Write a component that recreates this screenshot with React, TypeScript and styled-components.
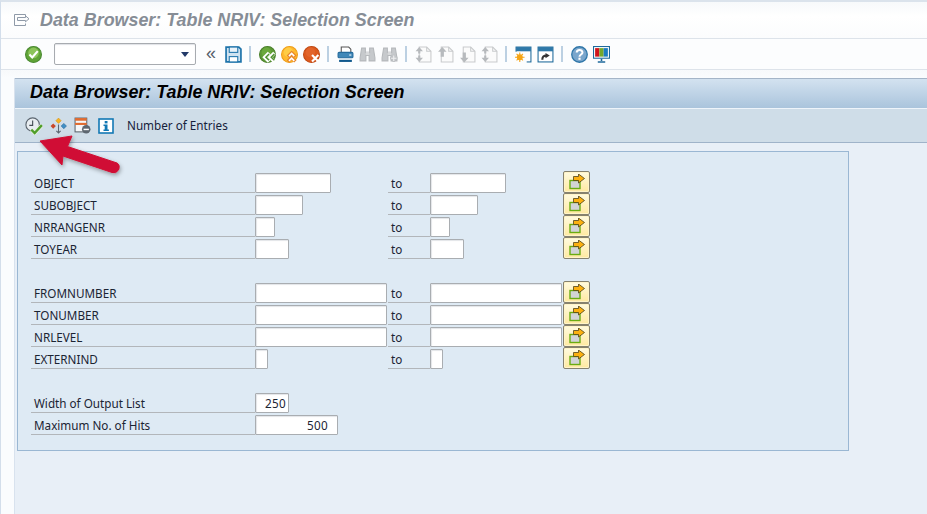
import React from "react";
import styled, { createGlobalStyle } from "styled-components";

const Global = createGlobalStyle`
  html, body { margin: 0; padding: 0; background: #fff; overflow: hidden; }
  * { box-sizing: border-box; }
`;
const Page = styled.div`
  position: relative; width: 927px; height: 514px; overflow: hidden;
  display: flex; flex-direction: column; background: #fafcfe;
  border-top: 2px solid #dbe3ec; border-left: 1px solid #d3deeb;
  font-family: "Noto Sans", "Open Sans", sans-serif; font-size: 11.7px; color: #1b2433;
`;
const TitleBar = styled.header`
  height: 37px; flex: none; display: flex; align-items: center; gap: 10px; padding-left: 13px;
  background: linear-gradient(#f7f9fb, #ffffff 40%, #fbfcfd);
  border-bottom: 1px solid #dde3ea;
`;
const TitleText = styled.h1`
  margin: 0; font: italic bold 17.9px "Liberation Sans", Arial, sans-serif; color: #868d96;
`;
const Toolbar = styled.nav`
  height: 31px; flex: none; display: flex; align-items: center; padding-left: 21px;
  background: #fcfdfe; border-bottom: 1px solid #dde3ea;
`;
const Slot = styled.span`
  width: 22px; height: 22px; flex: none; display: flex; align-items: center; justify-content: center;
`;
const Sep = styled.i`
  width: 12px; height: 16px; flex: none; display: block; position: relative;
  &::after { content: ""; position: absolute; left: 5px; top: 0; bottom: 0; width: 2px; background: #bcd0e2; }
`;
const Combo = styled.div`
  width: 142px; height: 22px; flex: none; margin-left: 10px; margin-right: 4px; position: relative;
  background: #fff; border: 1px solid #a7abb0; border-radius: 2px;
  box-shadow: inset 0 1px 1px #dfe2e6;
  &::after { content: ""; position: absolute; right: 6px; top: 8px;
    border-left: 4.5px solid transparent; border-right: 4.5px solid transparent; border-top: 5px solid #233a69; }
`;
const Chevrons = styled.span`
  width: 22px; flex: none; text-align: center; font: 18px/18px "Liberation Sans", sans-serif; color: #555f6b;
  margin-top: -3px;
`;
const Body = styled.div`
  flex: 1; display: flex; min-height: 0; background: linear-gradient(#f7f9fb, #fafcfe 8px);
`;
const Main = styled.main`
  flex: 1; margin: 8px 0 0 13px; background: #e8eff7; min-width: 0; display: flex; flex-direction: column;
  border-left: 1px solid #d8e2ee;
`;
const ScreenTitle = styled.div`
  height: 31px; flex: none; display: flex; align-items: center; padding: 0 0 2px 15px;
  border-top: 1px solid #a4b5c8; border-bottom: 1px solid #eef4fa;
  background: linear-gradient(#d3e2f0, #aac4dc);
  font: italic bold 17.9px "Liberation Sans", Arial, sans-serif; color: #000;
`;
const ActionBar = styled.div`
  height: 34px; flex: none; display: flex; align-items: center; padding-left: 7px; gap: 0;
  background: #cfdde8; border-bottom: 1px solid #9fb3c9;
`;
const ActionIcon = styled.span`
  width: 24px; height: 24px; flex: none; display: flex; align-items: center; justify-content: center;
`;
const ActionLabel = styled.span`
  margin: -2px 0 0 9px; color: #16213a;
`;
const Panel = styled.section`
  margin: 8px 0 0 2px; width: 832px; height: 300px; padding: 19px 0 0 13px;
  background: #deeaf4; border: 1px solid #9ab7d3;
`;
const Row = styled.div`
  height: 22px; display: grid; grid-template-columns: 224px 133px 42px 133px 27px;
  align-items: end;
`;
const Spacer = styled.div`
  height: 22px;
`;
const Label = styled.label`
  height: 22px; padding: 2px 0 0 3px; line-height: 20px; border-bottom: 1px solid #b2b6ba; white-space: nowrap;
`;
const Field = styled.div<{ $w: number; $pad?: number }>`
  width: ${(p) => p.$w}px; height: 20px; background: #fff; text-align: right;
  padding-right: ${(p) => p.$pad ?? 2}px; line-height: 18px; letter-spacing: 0.3px;
  border: 1px solid #a9adb1; border-radius: 1px; box-shadow: inset 1px 1px 1px #e3e5e8;
`;
const FieldCell = styled.div`
  height: 20px;
`;
const RangeButton = styled.button`
  width: 27px; height: 22px; padding: 0; display: flex; align-items: center; justify-content: center;
  background: linear-gradient(#fffbe0, #ffe9a0); border: 1px solid #86826e; border-radius: 2px;
  box-shadow: inset 0 0 0 1px #fff4c8;
`;
const ArrowLayer = styled.svg`
  position: absolute; left: 29px; top: 127px; overflow: visible; pointer-events: none;
`;

const Ico = ({ s = 16, children }: { s?: number; children: React.ReactNode }) => (
  <svg width={s} height={s} viewBox="0 0 16 16" fill="none">{children}</svg>
);
const CheckIcon = () => (
  <Ico s={17}>
    <circle cx="8" cy="8" r="7.5" fill="#5fa336" stroke="#4b8a34" />
    <circle cx="8" cy="6.5" r="5" fill="#8cc45a" />
    <path d="M4.2 8l2.6 2.8L12 4.8" stroke="#fff" strokeWidth="2" />
  </Ico>
);
const SaveIcon = () => (
  <Ico s={17}>
    <path d="M1 1h12l2 2v12H1z" fill="#cfe2f0" stroke="#1f74ab" strokeWidth="1.6" />
    <rect x="4" y="1" width="8" height="5" fill="#e9f2f9" stroke="#1f74ab" />
    <rect x="4" y="10" width="8" height="5" fill="#fff" stroke="#1f74ab" />
  </Ico>
);
const Round = ({ bg, edge, hi, children }: { bg: string; edge: string; hi: string; children: React.ReactNode }) => (
  <Ico s={17}>
    <circle cx="8" cy="8" r="7.5" fill={bg} stroke={edge} />
    <circle cx="7" cy="6" r="4.5" fill={hi} />
    {children}
  </Ico>
);
const BackIcon = () => (
  <Round bg="#5d9b35" edge="#4a7f2c" hi="#6aa83c">
    <path d="M9.5 6.5L5.5 10.5 9.5 14.5M14.5 6.5L10.5 10.5 14.5 14.5" stroke="#fff" strokeWidth="3.4" />
    <path d="M9.5 7.5L6.5 10.5 9.5 13.5M14.5 7.5L11.5 10.5 14.5 13.5" stroke="#4f9130" strokeWidth="1.4" />
  </Round>
);
const UpIcon = () => (
  <Round bg="#ffb92e" edge="#ee9d1a" hi="#ffcc44">
    <path d="M6.5 10L10 6.5 13.5 10M6.5 14.5L10 11 13.5 14.5" stroke="#e8862a" strokeWidth="3.2" />
    <path d="M7.5 9.5L10 7 12.5 9.5M7.5 14L10 11.5 12.5 14" stroke="#fff" strokeWidth="1.5" />
  </Round>
);
const CancelIcon = () => (
  <Round bg="#dd5a1e" edge="#c04a14" hi="#e2642a">
    <path d="M8.5 8.5l6 6M14.5 8.5l-6 6" stroke="#fff" strokeWidth="2" />
  </Round>
);
const PrintIcon = () => (
  <Ico s={17}>
    <path d="M4 6V1h7l2 2v3" stroke="#555" fill="#fff" />
    <rect x="1" y="6" width="14" height="5" rx="1" fill="#3f87b8" stroke="#236a9c" />
    <rect x="11.5" y="8" width="2" height="1" fill="#fff" />
    <rect x="2" y="13" width="12" height="2" fill="#11598d" />
  </Ico>
);
const Binoculars = ({ plus }: { plus?: boolean }) => (
  <Ico s={17}>
    <path d="M2.5 2h3.5v4h4V2h3.5l1.5 9v3h-5.5V9H6.5v5H1v-3z" fill="#c6c9cc" stroke="#b5b8bb" />
    <rect x="6.5" y="5.5" width="3" height="3" fill="#d8dadc" />
    {plus && <path d="M12 8v7M8.5 11.5h7" stroke="#c0c3c6" strokeWidth="2.6" />}
    {plus && <path d="M12 9v5M9.5 11.5h5" stroke="#f0f1f2" strokeWidth="1" />}
  </Ico>
);
const Sheet = ({ up, down }: { up?: boolean; down?: boolean }) => (
  <Ico s={17}>
    <path d="M4 1h7l4 4v10H4z" fill="#fbfbfb" stroke="#c9cbcd" />
    <path d="M11 1v4h4" stroke="#c9cbcd" />
    {up && down && <path d="M4 1L.5 5H3v2h2V5h2.5zM3 9v2H.5L4 15l3.5-4H5V9z" fill="#b7babd" />}
    {up && !down && <path d="M5 1L1 5.5h2.5V10h3V5.5H9z" fill="#b7babd" />}
    {down && !up && <path d="M3.5 6v5H1l4 4.5L9 11H6.5V6z" fill="#b7babd" />}
  </Ico>
);
const WinSun = () => (
  <Ico s={17}>
    <rect x="1" y="1" width="14" height="14" fill="#fff" stroke="#1f6a9c" />
    <rect x="1" y="1" width="14" height="4" fill="#2e78a8" />
    <path d="M0 5.5h5v5h6v5.5H0z" fill="#fcfdfe" />
    <circle cx="4.5" cy="10.5" r="2.8" fill="#f6a516" />
    <path d="M4.5 6v9M0 10.5h9M1.5 7.5l6 6M7.5 7.5l-6 6" stroke="#f6a516" />
  </Ico>
);
const WinJump = () => (
  <Ico s={17}>
    <rect x="1" y="1" width="14" height="14" fill="#fff" stroke="#1f6a9c" />
    <rect x="1" y="1" width="14" height="4" fill="#2e78a8" />
    <path d="M5 13c0-3 1-4 4-4" stroke="#333" strokeWidth="2" />
    <path d="M8 6.5l4 2.5-4 2.5z" fill="#333" />
  </Ico>
);
const HelpIcon = () => (
  <Ico s={17}>
    <circle cx="8" cy="8" r="7.3" fill="#7aa6cc" stroke="#2f76a8" strokeWidth="1.2" />
    <path d="M5.4 6.2C5.4 3 10.8 3 10.8 6c0 2-2.8 2-2.8 4.2" stroke="#fff" strokeWidth="1.9" />
    <rect x="7" y="11" width="2" height="2" fill="#fff" />
  </Ico>
);
const MonitorIcon = () => (
  <Ico s={17}>
    <rect x="0.5" y="0.5" width="15" height="11" fill="#fff" stroke="#1f6a9c" />
    <rect x="2" y="2" width="4" height="8" fill="#d0151c" />
    <rect x="6" y="2" width="4" height="8" fill="#75a82b" />
    <rect x="10" y="2" width="4" height="8" fill="#1c7cc0" />
    <path d="M8 12v2M4.5 15h7" stroke="#1f6a9c" strokeWidth="1.5" />
  </Ico>
);
const ExitIcon = () => (
  <Ico s={16}>
    <path d="M11.5 4.5v-2H.5v11h11v-2" stroke="#8f9aa8" />
    <path d="M3.5 5.5h8V3.8L15 6.8l-3.5 3V8.5h-8z" fill="#fbfcfd" stroke="#8f9aa8" />
  </Ico>
);
const ExecuteIcon = () => (
  <Ico s={18}>
    <circle cx="6.8" cy="6.8" r="6" fill="#e8edf1" stroke="#5c6670" strokeWidth="1" />
    <path d="M6.8 3v4.4H3.8" stroke="#444d56" />
    <path d="M5.6 11.2l3 3 6.4-7" stroke="#e8f0e0" strokeWidth="3.4" />
    <path d="M5.6 11.2l3 3 6.4-7" stroke="#4f9e2a" strokeWidth="2.1" />
  </Ico>
);
const OrgIcon = () => (
  <Ico s={17}>
    <path d="M8 1l2.5 2.5L8 6 5.5 3.5z" fill="#f5b324" stroke="#d88e10" strokeWidth=".5" />
    <path d="M3 6l2.5 2.5L3 11 .5 8.5z" fill="#c9482a" />
    <path d="M13 6l2.5 2.5L13 11l-2.5-2.5z" fill="#3f8fc5" stroke="#215f90" strokeWidth=".5" />
    <path d="M8 7v8M6 13l2 2 2-2" stroke="#5d6772" />
  </Ico>
);
const TableMinusIcon = () => (
  <Ico s={17}>
    <rect x="1" y="1" width="11" height="13" fill="#f5f7f9" stroke="#5e6770" />
    <rect x="1" y="1" width="11" height="2.5" fill="#e06b30" />
    <rect x="1" y="5.5" width="11" height="2" fill="#e06b30" />
    <circle cx="11.5" cy="11.5" r="4" fill="#5e6770" />
    <rect x="9" y="11" width="5" height="1.4" fill="#fff" />
  </Ico>
);
const InfoIcon = () => (
  <Ico s={16}>
    <rect x="1" y="1" width="14" height="14" fill="#fff" stroke="#1278b4" strokeWidth="1.6" />
    <rect x="6.7" y="3" width="2.8" height="2.4" fill="#1278b4" />
    <path d="M5.5 6.5h4v5h1.4V13H5.5v-1.5h1.2V8H5.5z" fill="#1278b4" />
  </Ico>
);
const RangeIcon = () => (
  <Ico s={16}>
    <rect x="1" y="6.5" width="10" height="8" fill="#d2d4d6" stroke="#6aac12" strokeWidth="1.4" />
    <path d="M4.5 2.5h5V0l6 4.5L9.5 9V6.5h-5z" fill="#fbb010" stroke="#4f4318" strokeWidth=".8" />
  </Ico>
);

type Item = { name: string; w: number };
const groups: Item[][] = [
  [
    { name: "OBJECT", w: 76 },
    { name: "SUBOBJECT", w: 48 },
    { name: "NRRANGENR", w: 20 },
    { name: "TOYEAR", w: 34 },
  ],
  [
    { name: "FROMNUMBER", w: 132 },
    { name: "TONUMBER", w: 132 },
    { name: "NRLEVEL", w: 132 },
    { name: "EXTERNIND", w: 13 },
  ],
];

export default function App() {
  return (
    <Page>
      <Global />
      <TitleBar>
        <ExitIcon />
        <TitleText>Data Browser: Table NRIV: Selection Screen</TitleText>
      </TitleBar>
      <Toolbar>
        <Slot><CheckIcon /></Slot>
        <Combo />
        <Chevrons>«</Chevrons>
        <Slot><SaveIcon /></Slot>
        <Sep />
        <Slot><BackIcon /></Slot>
        <Slot><UpIcon /></Slot>
        <Slot><CancelIcon /></Slot>
        <Sep />
        <Slot><PrintIcon /></Slot>
        <Slot><Binoculars /></Slot>
        <Slot><Binoculars plus /></Slot>
        <Sep />
        <Slot><Sheet up down /></Slot>
        <Slot><Sheet up /></Slot>
        <Slot><Sheet down /></Slot>
        <Slot><Sheet up down /></Slot>
        <Sep />
        <Slot><WinSun /></Slot>
        <Slot><WinJump /></Slot>
        <Sep />
        <Slot><HelpIcon /></Slot>
        <Slot><MonitorIcon /></Slot>
      </Toolbar>
      <Body>
        <Main>
          <ScreenTitle>Data Browser: Table NRIV: Selection Screen</ScreenTitle>
          <ActionBar>
            <ActionIcon><ExecuteIcon /></ActionIcon>
            <ActionIcon><OrgIcon /></ActionIcon>
            <ActionIcon><TableMinusIcon /></ActionIcon>
            <ActionIcon><InfoIcon /></ActionIcon>
            <ActionLabel>Number of Entries</ActionLabel>
          </ActionBar>
          <Panel>
            {groups.map((g, i) => (
              <React.Fragment key={i}>
                {g.map((it) => (
                  <Row key={it.name}>
                    <Label>{it.name}</Label>
                    <FieldCell><Field $w={it.w} /></FieldCell>
                    <Label>to</Label>
                    <FieldCell><Field $w={it.w} /></FieldCell>
                    <RangeButton><RangeIcon /></RangeButton>
                  </Row>
                ))}
                <Spacer />
              </React.Fragment>
            ))}
            <Row>
              <Label>Width of Output List</Label>
              <FieldCell><Field $w={34} $pad={2}>250</Field></FieldCell>
            </Row>
            <Row>
              <Label>Maximum No. of Hits</Label>
              <FieldCell><Field $w={83} $pad={9}>500</Field></FieldCell>
            </Row>
          </Panel>
        </Main>
      </Body>
      <ArrowLayer width="100" height="50" viewBox="0 0 100 50">
        <defs>
          <filter id="arrowShadow" x="-20%" y="-20%" width="150%" height="160%">
            <feDropShadow dx="1" dy="2" stdDeviation="2" floodColor="#000" floodOpacity="0.35" />
          </filter>
        </defs>
        <path
          d="M10 12 L42 7 L37.5 17.5 L87 34 Q90.5 36 88.5 41 Q86 45 82 43.5 L33 27 L32 36 Z"
          fill="#d01034"
          stroke="#d01034"
          strokeWidth="1"
          strokeLinejoin="round"
          filter="url(#arrowShadow)"
        />
      </ArrowLayer>
    </Page>
  );
}
